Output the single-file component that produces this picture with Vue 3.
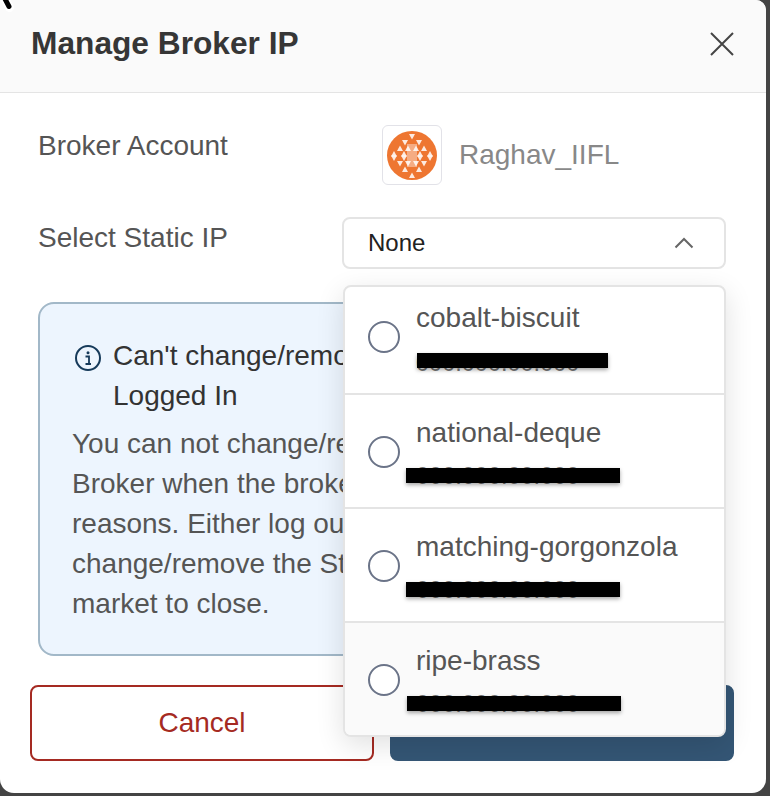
<script setup>
const ips = [
  { name: 'cobalt-biscuit', hover: false, bar: 'bar-a' },
  { name: 'national-deque', hover: false, bar: 'bar-b' },
  { name: 'matching-gorgonzola', hover: false, bar: 'bar-b' },
  { name: 'ripe-brass', hover: true, bar: 'bar-c' },
]

const cx = 29
const cy = 29.5
const rows = [
  [-19, [0], -1],
  [-13, [-7, 7], -1],
  [-7, [-12, -4, 4, 12], 1],
  [-1.5, [-18, -8, 8, 18], 1],
  [2.5, [-18, -8, 8, 18], -1],
  [8, [-12, -4, 4, 12], -1],
  [14, [-7, 7], 1],
  [20, [0], 1],
]
const triangles = rows.flatMap(([dy, xs, dir]) =>
  xs.map((dx) => {
    const x = cx + dx
    const y = cy + dy
    return `${x},${y - 3 * dir} ${x + 3},${y + 2.5 * dir} ${x - 3},${y + 2.5 * dir}`
  })
)
</script>

<template>
  <div class="screen">
    <svg class="cursor" width="16" height="16" viewBox="0 0 16 16" aria-hidden="true">
      <path d="M4 -3 L9.500 7.500" stroke="#fff" stroke-width="9" stroke-linecap="round" />
      <path d="M4 -3 L9 6.500" stroke="#000" stroke-width="5" stroke-linecap="round" />
    </svg>
    <section class="modal">
      <header class="head">
        <h1>Manage Broker IP</h1>
        <svg class="close" width="24" height="24" viewBox="0 0 24 24" aria-label="Close">
          <path d="M1 1 L23 23 M23 1 L1 23" stroke="#444" stroke-width="2" fill="none" />
        </svg>
      </header>

      <div class="body">
        <div class="row account-row">
          <span class="label">Broker Account</span>
          <div class="account">
            <span class="logo">
              <svg class="logo-art" width="58" height="58" viewBox="0 0 58 58" aria-hidden="true">
                <ellipse cx="29" cy="29.500" rx="25" ry="24.500" fill="#ee7631" />
                <rect x="24" y="18" width="10" height="23" fill="#fff" fill-opacity=".4" />
                <polygon v-for="t in triangles" :key="t" :points="t" fill="#fff" fill-opacity=".85" />
              </svg>
            </span>
            <span class="account-name">Raghav_IIFL</span>
          </div>
        </div>

        <div class="row select-row">
          <span class="label">Select Static IP</span>
          <div class="select-wrap">
            <div class="select">
              <span>None</span>
              <svg width="20" height="12" viewBox="0 0 20 12" aria-hidden="true">
                <path d="M1.500 10.500 L10 2 L18.500 10.500" stroke="#666" stroke-width="2" fill="none" />
              </svg>
            </div>
            <ul class="menu">
              <li v-for="ip in ips" :key="ip.name" class="option" :class="{ hover: ip.hover }">
                <span class="radio"></span>
                <div class="option-text">
                  <span class="ip-name">{{ ip.name }}</span>
                  <span class="ip-address">
                    000.000.00.000
                    <span class="redact" :class="ip.bar"></span>
                  </span>
                </div>
              </li>
            </ul>
          </div>
        </div>

        <div class="alert">
          <div class="alert-title">
            <svg class="info" width="26" height="26" viewBox="0 0 26 26" aria-hidden="true">
              <circle cx="13" cy="13" r="12" stroke="#163a5a" stroke-width="2" fill="none" />
              <circle cx="13" cy="7.800" r="1.500" fill="#163a5a" />
              <path d="M10.500 11.500 H14 V18.500 M10.500 19 H16" stroke="#163a5a" stroke-width="1.800" fill="none" />
            </svg>
            <span>Can't change/remove Static IP when Broker is Logged In</span>
          </div>
          <p>You can not change/remove the Static IP of a Broker when the broker is logged in for security reasons. Either log out from the broker to change/remove the Static IP or wait for the<br>market to close.</p>
        </div>

        <div class="actions">
          <button class="btn cancel" type="button">Cancel</button>
          <button class="btn save" type="button" aria-label="Save"></button>
        </div>
      </div>
    </section>
  </div>
</template>

<style scoped>
.screen {
  position: relative;
  width: 770px;
  height: 796px;
  overflow: hidden;
  background: #444;
  font-family: "Liberation Sans", Arial, sans-serif;
}
.cursor {
  position: absolute;
  left: 0;
  top: 0;
  z-index: 5;
}
.modal {
  width: 766px;
  height: 793px;
  background: #fff;
  border-radius: 0 10px 14px 14px;
  overflow: hidden;
  display: flex;
  flex-direction: column;
}
.head {
  height: 92px;
  flex: none;
  display: flex;
  align-items: center;
  justify-content: space-between;
  padding: 0 31px;
  background: #fafafa;
  border-bottom: 1px solid #e4e4e4;
}
.head h1 {
  margin: 0 0 6px;
  font-size: 31.700px;
  font-weight: 700;
  line-height: 40px;
  color: #363636;
}
.close {
  margin: 0 1px 4px 0;
}
.body {
  padding: 32px 40px 0 38px;
  display: flex;
  flex-direction: column;
}
.row {
  display: flex;
  align-items: flex-start;
}
.label {
  width: 304px;
  flex: none;
  margin-top: 1px;
  font-size: 28px;
  line-height: 40px;
  color: #555;
}
.account-row {
  height: 92px;
}
.account {
  display: flex;
  align-items: center;
  gap: 17px;
  margin-left: 40px;
}
.logo {
  width: 60px;
  height: 60px;
  box-sizing: border-box;
  border: 1px solid #e2e2e8;
  border-radius: 6px;
  display: flex;
  align-items: center;
  justify-content: center;
  background: #fff;
}
.logo-art {
  filter: blur(.4px);
}
.account-name {
  font-size: 28px;
  line-height: 60px;
  color: #888;
}
.select-row {
  position: relative;
  height: 85px;
  z-index: 2;
}
.select-wrap {
  position: relative;
  width: 384px;
}
.select {
  height: 52px;
  box-sizing: border-box;
  border: 2px solid #e4e4e4;
  border-radius: 8px;
  background: #fff;
  padding: 0 30px 0 24px;
  display: flex;
  align-items: center;
  justify-content: space-between;
  font-size: 24px;
  color: #222;
}
.menu {
  position: absolute;
  top: 68px;
  left: 1px;
  right: 0;
  margin: 0;
  padding: 0;
  list-style: none;
  box-sizing: border-box;
  border: 2px solid #e4e4e4;
  border-radius: 8px;
  background: #fff;
  overflow: hidden;
  box-shadow: 0 8px 28px rgba(0, 0, 0, .12);
}
.option {
  height: 114px;
  box-sizing: border-box;
  border-top: 2px solid #e4e4e4;
  padding: 18px 0 0 23px;
  display: flex;
  gap: 16px;
}
.option:first-child {
  height: 106px;
  border-top: 0;
  padding-top: 11px;
}
.option.hover {
  background: #fafafa;
}
.radio {
  width: 32px;
  height: 32px;
  box-sizing: border-box;
  border: 2px solid #6b7488;
  border-radius: 50%;
  background: #fff;
  margin-top: 23px;
  flex: none;
}
.option-text {
  display: flex;
  flex-direction: column;
}
.ip-name {
  font-size: 28px;
  line-height: 40px;
  color: #555;
  white-space: nowrap;
}
.ip-address {
  position: relative;
  font-size: 23.500px;
  line-height: 34px;
  color: #777;
  white-space: nowrap;
  margin-top: 6px;
}
.option:first-child .ip-address {
  margin-top: 8px;
}
.redact {
  position: absolute;
  height: 15px;
  background: #000;
  box-shadow: 0 2px 4px rgba(0, 0, 0, .35);
}
.bar-a { left: 1px; width: 191px; top: 7px; }
.bar-b { left: -10px; width: 214px; top: 9px; }
.bar-c { left: -9px; width: 214px; top: 9px; }
.alert {
  box-sizing: border-box;
  height: 354px;
  border: 2px solid #a2b8c8;
  border-radius: 16px;
  background: #edf5fe;
  padding: 32px 20px 0 32px;
  font-size: 28px;
  line-height: 40px;
  color: #555;
}
.alert-title {
  display: flex;
  padding-left: 3px;
  color: #333;
  gap: 12px;
}
.info {
  flex: none;
  margin-top: 9px;
}
.alert p {
  margin: 8px 0 0;
}
.actions {
  display: flex;
  gap: 16px;
  margin: 29px -8px 0;
}
.btn {
  flex: 1 1 0;
  min-width: 0;
  height: 76px;
  padding: 0;
  box-sizing: border-box;
  border-radius: 8px;
  font-family: inherit;
  font-size: 28px;
}
.cancel {
  background: #fff;
  border: 2px solid #a52a22;
  color: #a52a22;
}
.save {
  background: #345675;
  border: 2px solid #345675;
}
</style>
